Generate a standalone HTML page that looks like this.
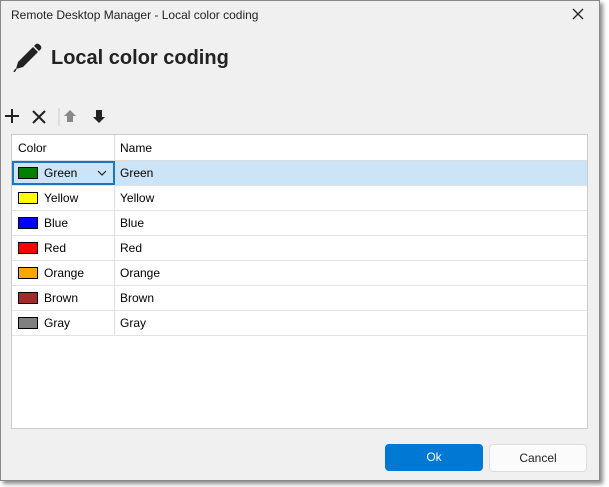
<!DOCTYPE html>
<html><head><style>
body{margin:0;width:609px;height:487px;background:#fff;font-family:"Liberation Sans",sans-serif;position:relative;overflow:hidden}
.win{position:absolute;left:0;top:0;width:598px;height:479px;background:#f0f0f0;border:1px solid #888;box-shadow:3px 3px 4px rgba(0,0,0,.45)}
.t{position:absolute;font-size:12px;color:#222}
.grid{position:absolute;left:10px;top:133px;width:575px;height:293px;background:#fff;border:1px solid #ccc}
.row{position:absolute;left:0;width:575px;height:24px;border-bottom:1px solid #e3e3e3;font-size:12px}
.row span{position:absolute;top:5px}
.sw{position:absolute;left:6px;top:6px;width:18px;height:10px;border:1px solid #000}
.vl{position:absolute;left:102px;top:0;width:1px;height:200px;background:#e0e0e0}
.btn{position:absolute;top:443px;height:27px;border-radius:4px;font-size:12px;text-align:center;line-height:27px}
</style></head><body>
<div class="win">
<div class="t" style="left:10px;top:7px">Remote Desktop Manager - Local color coding</div>
<svg style="position:absolute;left:571px;top:7px" width="12" height="12"><path d="M1 1L11 11M11 1L1 11" stroke="#222" stroke-width="1.3"/></svg>
<svg style="position:absolute;left:10px;top:41px" width="32" height="30"><path d="M5 27L7 20L22 5L27 10L12 25Z" fill="#222"/><path d="M23 4L25 2Q27 1 29 3Q31 5 30 7L28 9Z" fill="#222"/><path d="M5 27L3 30" stroke="#222" stroke-width="1.5"/></svg>
<div style="position:absolute;left:50px;top:46px;font-size:20px;font-weight:bold;color:#222">Local color coding</div>
<svg style="position:absolute;left:3px;top:107px" width="110" height="18"><path d="M1 8H15M8 1V15" stroke="#222" stroke-width="2"/><path d="M29 3L41 15M41 3L29 15" stroke="#222" stroke-width="2"/><path d="M55 0V26" stroke="#ccc"/><path d="M66 2L72 8H69V14H63V8H60Z" fill="#888"/><path d="M95 15L101 9H98V2H92V9H89Z" fill="#222"/></svg>
<div class="grid">
<div class="vl"></div>
<div class="row" style="top:0;height:25px;border-bottom:1px solid #ddd"><span style="left:6px;top:6px">Color</span><span style="left:108px;top:6px">Name</span></div>
<div class="row" style="top:26px;background:#cce4f7"><div style="position:absolute;left:0;top:0;width:99px;height:20px;border:2px solid #1e74c4"></div><div class="sw" style="background:#008000"></div><span style="left:32px">Green</span><svg style="position:absolute;left:85px;top:9px" width="10" height="6"><path d="M1 1L5 5L9 1" stroke="#222" fill="none" stroke-width="1.2"/></svg><span style="left:108px">Green</span></div>
<div class="row" style="top:51px"><div class="sw" style="background:#ffff00"></div><span style="left:32px">Yellow</span><span style="left:108px">Yellow</span></div>
<div class="row" style="top:76px"><div class="sw" style="background:#0000ff"></div><span style="left:32px">Blue</span><span style="left:108px">Blue</span></div>
<div class="row" style="top:101px"><div class="sw" style="background:#ff0000"></div><span style="left:32px">Red</span><span style="left:108px">Red</span></div>
<div class="row" style="top:126px"><div class="sw" style="background:#ffa500"></div><span style="left:32px">Orange</span><span style="left:108px">Orange</span></div>
<div class="row" style="top:151px"><div class="sw" style="background:#a52a2a"></div><span style="left:32px">Brown</span><span style="left:108px">Brown</span></div>
<div class="row" style="top:176px"><div class="sw" style="background:#808080"></div><span style="left:32px">Gray</span><span style="left:108px">Gray</span></div>
</div>
<div class="btn" style="left:384px;width:98px;background:#0078d4;color:#fff">Ok</div>
<div class="btn" style="left:488px;width:96px;background:#fbfbfb;border:1px solid #ddd;height:26px;color:#222">Cancel</div>
</div>
</body></html>
